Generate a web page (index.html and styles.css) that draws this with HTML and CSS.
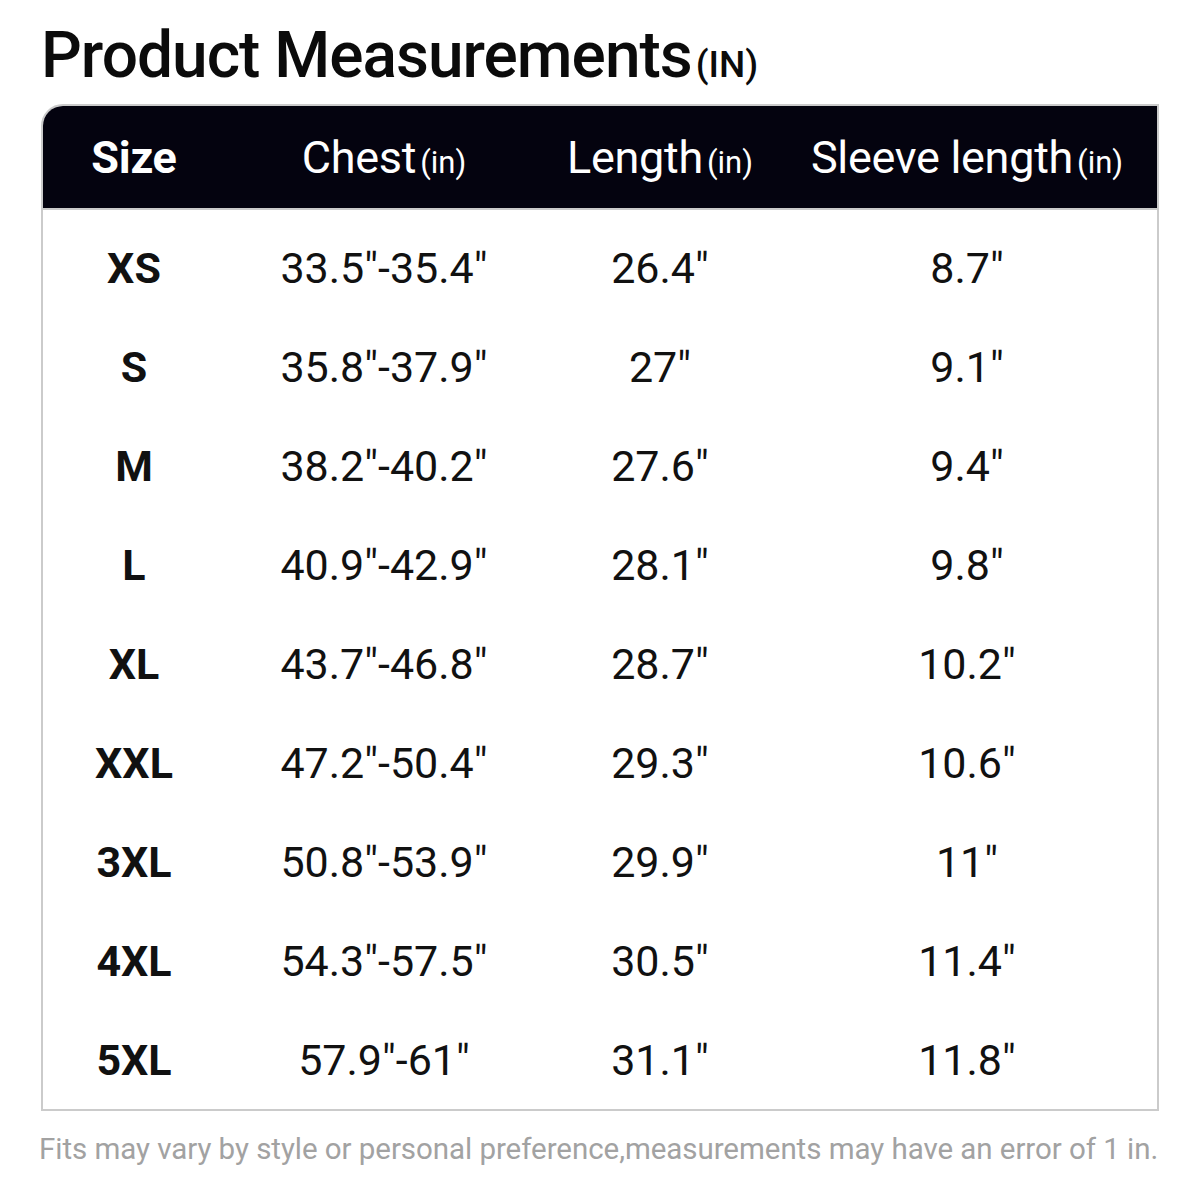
FILE: index.html
```html
<!DOCTYPE html>
<html>
<head>
<meta charset="utf-8">
<link rel="stylesheet" href="styles.css">
</head>
<body>
<div class="page">
  <h1 class="title">Product Measurements<span class="unit">(IN)</span></h1>
  <div class="table">
    <div class="row head">
      <div class="cell c1 b">Size</div>
      <div class="cell c2">Chest<span class="sm">(in)</span></div>
      <div class="cell c3">Length<span class="sm">(in)</span></div>
      <div class="cell c4">Sleeve length<span class="sm">(in)</span></div>
    </div>
    <div class="body">
      <div class="row"><div class="cell c1 b">XS</div><div class="cell c2">33.5"-35.4"</div><div class="cell c3">26.4"</div><div class="cell c4">8.7"</div></div>
      <div class="row"><div class="cell c1 b">S</div><div class="cell c2">35.8"-37.9"</div><div class="cell c3">27"</div><div class="cell c4">9.1"</div></div>
      <div class="row"><div class="cell c1 b">M</div><div class="cell c2">38.2"-40.2"</div><div class="cell c3">27.6"</div><div class="cell c4">9.4"</div></div>
      <div class="row"><div class="cell c1 b">L</div><div class="cell c2">40.9"-42.9"</div><div class="cell c3">28.1"</div><div class="cell c4">9.8"</div></div>
      <div class="row"><div class="cell c1 b">XL</div><div class="cell c2">43.7"-46.8"</div><div class="cell c3">28.7"</div><div class="cell c4">10.2"</div></div>
      <div class="row"><div class="cell c1 b">XXL</div><div class="cell c2">47.2"-50.4"</div><div class="cell c3">29.3"</div><div class="cell c4">10.6"</div></div>
      <div class="row"><div class="cell c1 b">3XL</div><div class="cell c2">50.8"-53.9"</div><div class="cell c3">29.9"</div><div class="cell c4">11"</div></div>
      <div class="row"><div class="cell c1 b">4XL</div><div class="cell c2">54.3"-57.5"</div><div class="cell c3">30.5"</div><div class="cell c4">11.4"</div></div>
      <div class="row"><div class="cell c1 b">5XL</div><div class="cell c2">57.9"-61"</div><div class="cell c3">31.1"</div><div class="cell c4">11.8"</div></div>
    </div>
  </div>
  <p class="note">Fits may vary by style or personal preference,measurements may have an error of 1 in.</p>
</div>
</body>
</html>
```
FILE: styles.css
```css
html, body {
  margin: 0;
  padding: 0;
  background: #fff;
}
body {
  font-family: Roboto, "Liberation Sans", sans-serif;
  color: #111;
}
.page {
  width: 1200px;
  height: 1200px;
  padding: 20px 41px 0 41px;
  box-sizing: border-box;
}
.title {
  margin: 0;
  height: 72px;
  display: flex;
  align-items: baseline;
  font-size: 64px;
  font-weight: 500;
  line-height: 72px;
  letter-spacing: -1px;
  color: #0b0b0b;
}
.unit {
  font-size: 37px;
  letter-spacing: 0;
  margin-left: 4px;
}
.table {
  margin-top: 12px;
  border: 2px solid #cbcbcb;
  border-top-left-radius: 22px;
  overflow: hidden;
  width: 1118px;
  box-sizing: border-box;
}
.row {
  display: grid;
  grid-template-columns: 182px 318px 234px 1fr;
  height: 99px;
  align-items: center;
}
.body {
  padding-top: 8px;
}
.row.head {
  height: 104px;
  background: #04030f;
  color: #fff;
  border-bottom: 2px solid #cbcbcb;
  box-sizing: border-box;
}
.cell {
  text-align: center;
  font-size: 43px;
  white-space: nowrap;
}
.head .cell {
  font-size: 45px;
  letter-spacing: -0.3px;
}
.b {
  font-weight: 700;
}
.sm {
  font-size: 31px;
  letter-spacing: 0;
  margin-left: 4px;
}
.note {
  margin: 21px 0 0 -2px;
  font-size: 29.5px;
  color: #a2a2a2;
  letter-spacing: -0.05px;
  white-space: nowrap;
}
```
